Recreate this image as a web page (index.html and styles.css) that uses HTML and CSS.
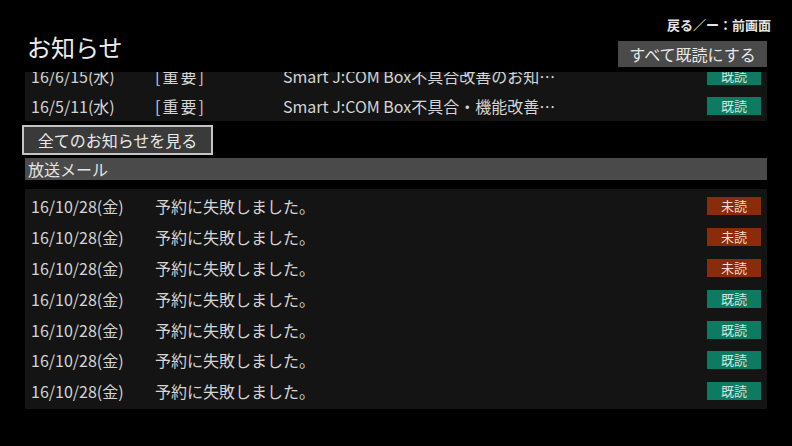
FILE: index.html
```html
<!DOCTYPE html>
<html lang="ja">
<head>
  <meta charset="UTF-8" />
  <title>お知らせ</title>
  <link rel="stylesheet" href="styles.css">
</head>
<body>
  <div class="screen">
    <div class="header">
      <h1 class="title">お知らせ</h1>
      <div class="header-right">
        <div class="back-hint">戻る／ー：前画面</div>
        <button class="mark-all">すべて既読にする</button>
      </div>
    </div>

    <!-- お知らせ list (scrolled) -->
    <div class="notice-panel">
      <div class="notice-list">
        <div class="row">
          <span class="col-date">16/6/15(水)</span>
          <span class="col-tag">[重要]</span>
          <span class="col-text">Smart J:COM Box不具合改善のお知…</span>
          <span class="badge read">既読</span>
        </div>
        <div class="row">
          <span class="col-date">16/5/11(水)</span>
          <span class="col-tag">[重要]</span>
          <span class="col-text">Smart J:COM Box不具合・機能改善…</span>
          <span class="badge read">既読</span>
        </div>
      </div>
    </div>

    <button class="show-all">全てのお知らせを見る</button>

    <div class="section-bar">放送メール</div>

    <div class="mail-panel">
      <div class="row"><span class="col-date">16/10/28(金)</span><span class="col-msg">予約に失敗しました。</span><span class="badge unread">未読</span></div>
      <div class="row"><span class="col-date">16/10/28(金)</span><span class="col-msg">予約に失敗しました。</span><span class="badge unread">未読</span></div>
      <div class="row"><span class="col-date">16/10/28(金)</span><span class="col-msg">予約に失敗しました。</span><span class="badge unread">未読</span></div>
      <div class="row"><span class="col-date">16/10/28(金)</span><span class="col-msg">予約に失敗しました。</span><span class="badge read">既読</span></div>
      <div class="row"><span class="col-date">16/10/28(金)</span><span class="col-msg">予約に失敗しました。</span><span class="badge read">既読</span></div>
      <div class="row"><span class="col-date">16/10/28(金)</span><span class="col-msg">予約に失敗しました。</span><span class="badge read">既読</span></div>
      <div class="row"><span class="col-date">16/10/28(金)</span><span class="col-msg">予約に失敗しました。</span><span class="badge read">既読</span></div>
    </div>
  </div>
</body>
</html>
```

FILE: styles.css
```css
* { box-sizing: border-box; }
html, body {
  margin: 0;
  background: #000;
}
body {
  font-family: "Noto Sans CJK JP", "Noto Sans", sans-serif;
  color: #d8d8d8;
  width: 792px;
  height: 446px;
  overflow: hidden;
}
.screen {
  padding: 0 25px;
  display: flex;
  flex-direction: column;
  align-items: flex-start;
}
.header {
  width: 100%;
  height: 72px;
  display: flex;
  justify-content: space-between;
}
.title {
  margin: 0;
  padding: 33px 0 0 2px;
  font-size: 24px;
  line-height: 28px;
  font-weight: normal;
  color: #ececec;
}
.header-right {
  display: flex;
  flex-direction: column;
  align-items: flex-end;
}
.back-hint {
  margin-top: 17px;
  margin-right: -4px;
  font-size: 13px;
  line-height: 16px;
  font-weight: bold;
  color: #e4e4e4;
}
.mark-all {
  margin-top: 8px;
  width: 149px;
  height: 26px;
  padding: 0;
  border: none;
  background: #4a4a4a;
  color: #e8e8e8;
  font-family: inherit;
  font-size: 16px;
  line-height: 26px;
}

.notice-panel {
  width: 100%;
  height: 49px;
  overflow: hidden;
  background: #141414;
}
.notice-list {
  margin-top: -11px;
}
.row {
  display: flex;
  align-items: center;
  height: 30px;
  padding: 0 6px;
  font-size: 16px;
  color: #d4d4d4;
}
.col-date {
  width: 124px;
  flex-shrink: 0;
}
.col-tag {
  width: 128px;
  flex-shrink: 0;
  letter-spacing: 2px;
}
.col-text, .col-msg {
  flex: 1;
  white-space: nowrap;
}
.badge {
  width: 54px;
  height: 18px;
  font-size: 13px;
  line-height: 18px;
  text-align: center;
  flex-shrink: 0;
}
.badge.read {
  background: #0f7a62;
  color: #cfe6de;
}
.badge.unread {
  background: #8a2c0c;
  color: #f2dccd;
}

.show-all {
  margin: 4px 0 0 -3px;
  width: 191px;
  height: 30px;
  padding: 0;
  border: 2px solid #c4c4c4;
  background: #3a3a3a;
  color: #e8e8e8;
  font-family: inherit;
  font-size: 16px;
  line-height: 26px;
}
.section-bar {
  margin-top: 3px;
  width: 100%;
  height: 22px;
  padding-left: 3px;
  background: #4a4a4a;
  color: #e4e4e4;
  font-size: 16px;
  line-height: 22px;
}
.mail-panel {
  margin-top: 9px;
  width: 100%;
  height: 220px;
  padding-top: 2px;
  background: #141414;
}
.mail-panel .row {
  height: 30.8px;
}
```
